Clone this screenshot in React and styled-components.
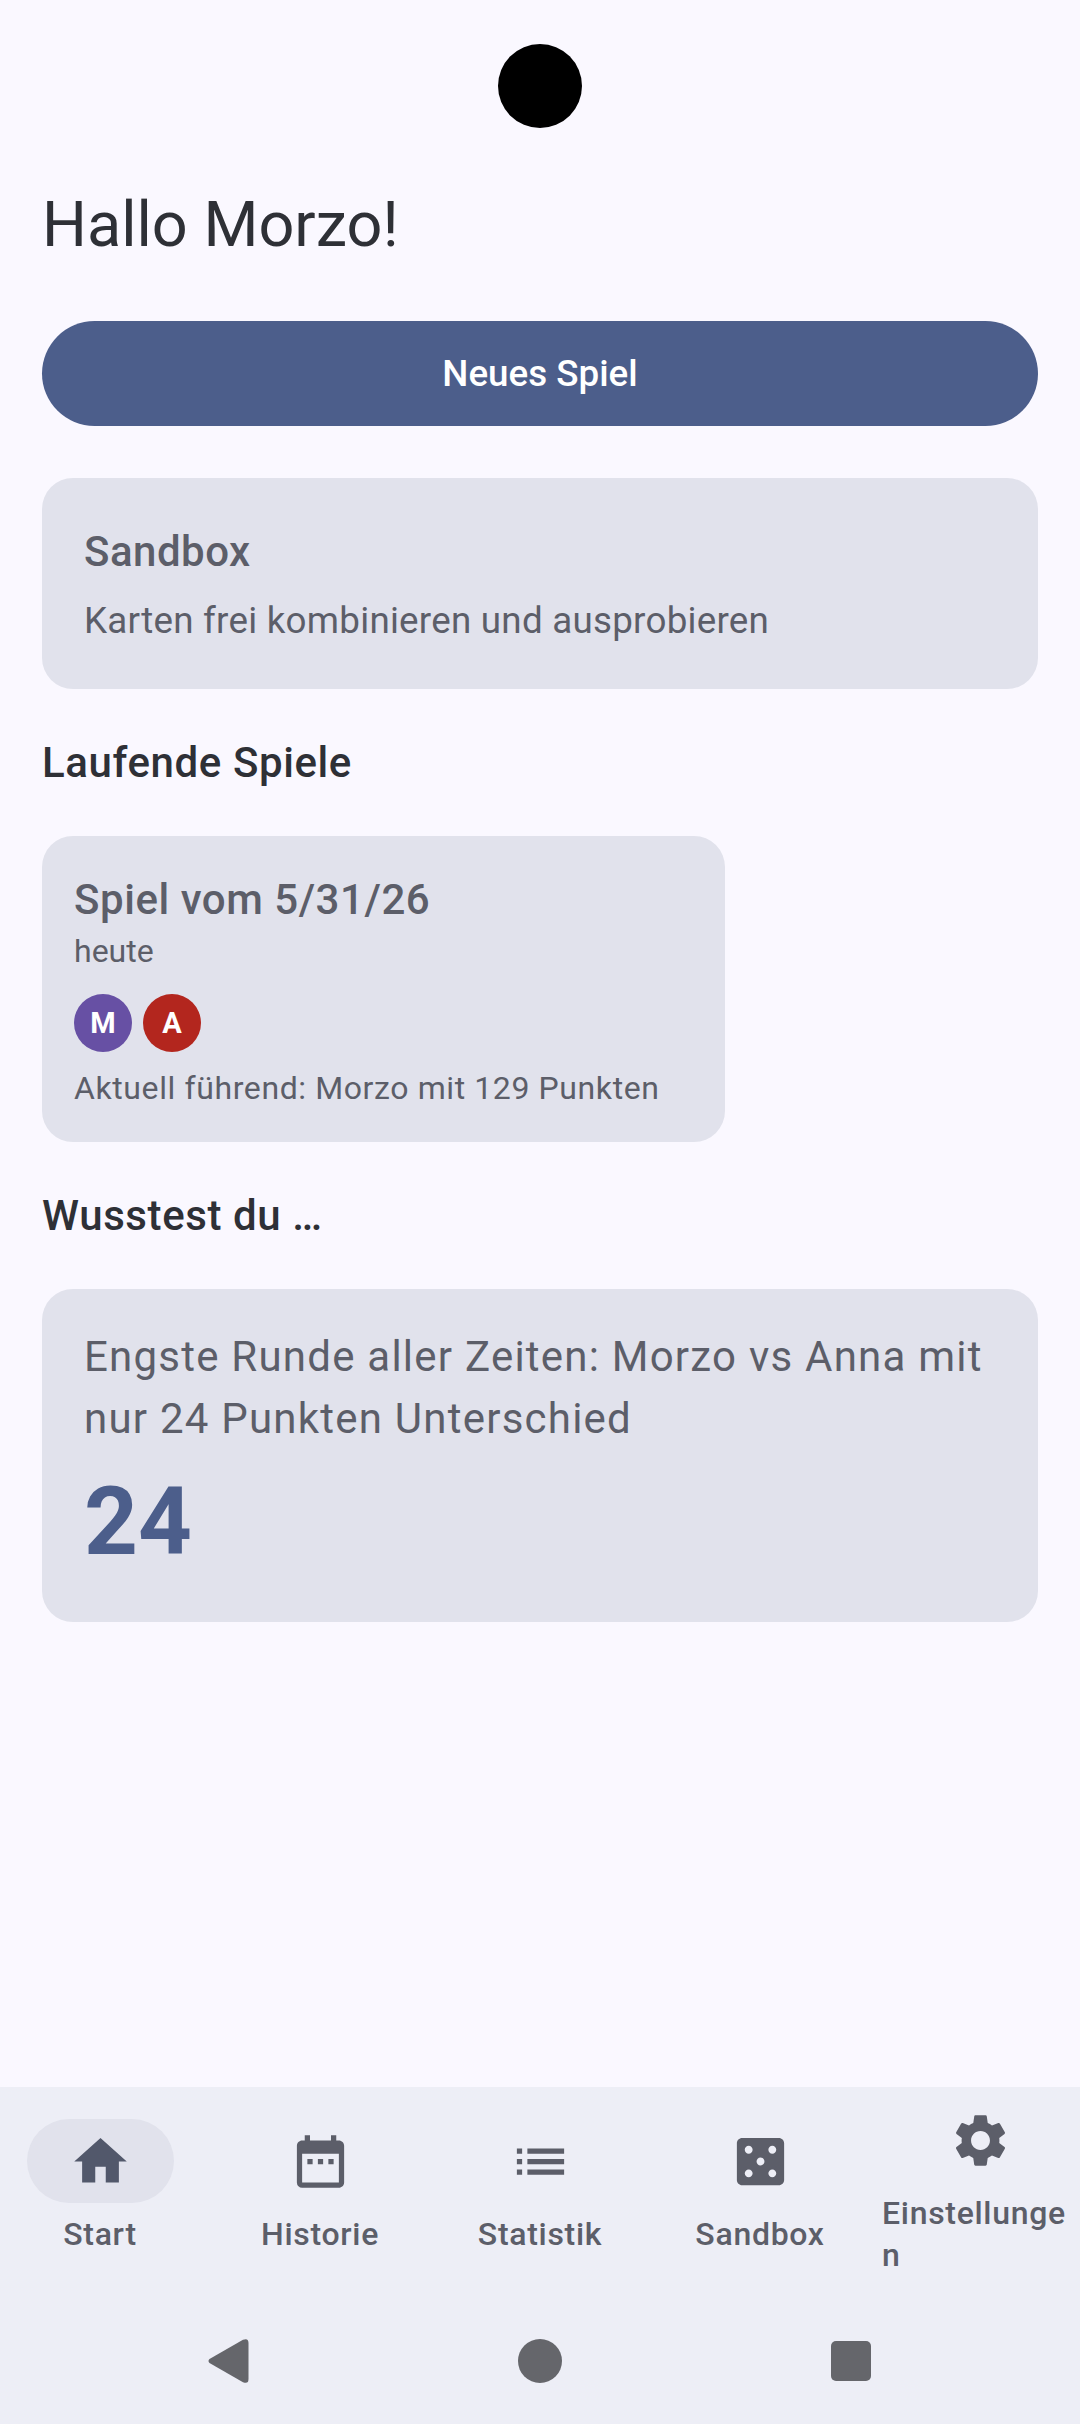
import React from "react";
import styled, { createGlobalStyle } from "styled-components";
import { MdHome, MdDateRange, MdList, MdCasino, MdSettings } from "react-icons/md";

const GlobalStyle = createGlobalStyle`
  html, body {
    margin: 0;
    padding: 0;
    background: #faf8ff;
  }
  * {
    box-sizing: border-box;
  }
`;

const Screen = styled.div`
  width: 1080px;
  height: 2424px;
  display: flex;
  flex-direction: column;
  background: #faf8ff;
  font-family: Roboto, "Noto Sans", sans-serif;
  color: #2e3036;
`;

const Content = styled.main`
  flex: 1;
  display: flex;
  flex-direction: column;
  padding: 44px 42px 0;
`;

const Camera = styled.div`
  width: 84px;
  height: 84px;
  border-radius: 50%;
  background: #000;
  align-self: center;
  margin-bottom: 56px;
`;

const Title = styled.h1`
  margin: 0 0 55px;
  font-size: 63px;
  line-height: 82px;
  font-weight: 400;
`;

const PrimaryButton = styled.button`
  height: 105px;
  border: 0;
  border-radius: 53px;
  background: #4c5e8b;
  color: #fff;
  font: 500 36.75px/50px Roboto, sans-serif;
  margin-bottom: 52px;
`;

const Card = styled.section`
  background: #e1e2ec;
  color: #5c5e69;
  border-radius: 31px;
  width: 996px;
`;

const SandboxCard = styled(Card)`
  padding: 45px 42px 42px;
`;

const GameCard = styled(Card)`
  width: 683px;
  padding: 35px 32px 31px;
`;

const FactCard = styled(Card)`
  padding: 37px 42px 45px;
`;

const CardTitle = styled.div`
  font-size: 42px;
  line-height: 58px;
  font-weight: 500;
  letter-spacing: 0.5px;
`;

const CardBody = styled.div`
  font-size: 36.75px;
  line-height: 52px;
  letter-spacing: 0.25px;
  margin-top: 14px;
`;

const SectionTitle = styled.h2`
  margin: 45px 0 44px;
  font-size: 42px;
  line-height: 58px;
  font-weight: 500;
  letter-spacing: 0.6px;
`;

const GameTitle = styled.div`
  font-size: 42px;
  line-height: 58px;
  font-weight: 500;
  letter-spacing: 0.55px;
`;

const GameDate = styled.div`
  font-size: 32px;
  line-height: 40px;
  margin-top: 2px;
`;

const Avatars = styled.div`
  display: flex;
  gap: 11px;
  margin: 23px 0 13px;
`;

const Avatar = styled.div`
  width: 58px;
  height: 58px;
  border-radius: 50%;
  background: ${({ $color }) => $color};
  color: #fff;
  display: flex;
  align-items: center;
  justify-content: center;
  font-size: 29px;
  font-weight: 700;
`;

const Leader = styled.div`
  font-size: 32px;
  line-height: 46px;
  letter-spacing: 0.6px;
`;

const FactText = styled.div`
  font-size: 42px;
  line-height: 62px;
  letter-spacing: 1.23px;
`;

const FactNumber = styled.div`
  font-size: 94px;
  line-height: 110px;
  font-weight: 700;
  color: #4c5e8b;
  margin-top: 17px;
`;

const NavBar = styled.nav`
  height: 337px;
  background: #edeef6;
  display: flex;
  flex-direction: column;
`;

const NavItems = styled.div`
  height: 200px;
  display: flex;
  justify-content: space-between;
  align-items: center;
  padding: 0 2px;
`;

const NavItem = styled.div`
  width: 196px;
  display: flex;
  flex-direction: column;
  align-items: center;
  gap: 10px;
  color: #5c5e69;
`;

const IconPill = styled.div`
  width: 147px;
  height: 84px;
  border-radius: 42px;
  display: flex;
  align-items: center;
  justify-content: center;
  font-size: 63px;
  background: ${({ $active }) => ($active ? "#e1e2ec" : "transparent")};
  color: ${({ $active }) => ($active ? "#52586b" : "inherit")};
`;

const NavLabel = styled.div`
  width: ${({ $wrap }) => ($wrap ? "196px" : "auto")};
  font-size: 32px;
  line-height: 42px;
  font-weight: 500;
  letter-spacing: 0.7px;
  overflow-wrap: anywhere;
`;

const SystemBar = styled.div`
  flex: 1;
  display: flex;
  justify-content: center;
  align-items: center;
  gap: 263px;
  padding-top: 11px;
  color: #65666b;
`;

const SystemIcon = styled.svg`
  width: 48px;
  height: 48px;
  fill: currentColor;
`;

const navItems = [
  { label: "Start", Icon: MdHome, active: true },
  { label: "Historie", Icon: MdDateRange },
  { label: "Statistik", Icon: MdList },
  { label: "Sandbox", Icon: MdCasino },
  { label: "Einstellungen", Icon: MdSettings, wrap: true },
];

export default function App() {
  return (
    <Screen>
      <GlobalStyle />
      <Content>
        <Camera />
        <Title>Hallo Morzo!</Title>
        <PrimaryButton>Neues Spiel</PrimaryButton>
        <SandboxCard>
          <CardTitle>Sandbox</CardTitle>
          <CardBody>Karten frei kombinieren und ausprobieren</CardBody>
        </SandboxCard>
        <SectionTitle>Laufende Spiele</SectionTitle>
        <GameCard>
          <GameTitle>Spiel vom 5/31/26</GameTitle>
          <GameDate>heute</GameDate>
          <Avatars>
            <Avatar $color="#6750a4">M</Avatar>
            <Avatar $color="#b3261e">A</Avatar>
          </Avatars>
          <Leader>Aktuell führend: Morzo mit 129 Punkten</Leader>
        </GameCard>
        <SectionTitle>Wusstest du …</SectionTitle>
        <FactCard>
          <FactText>Engste Runde aller Zeiten: Morzo vs Anna mit nur 24 Punkten Unterschied</FactText>
          <FactNumber>24</FactNumber>
        </FactCard>
      </Content>
      <NavBar>
        <NavItems>
          {navItems.map(({ label, Icon, active, wrap }) => (
            <NavItem key={label}>
              <IconPill $active={active}>
                <Icon />
              </IconPill>
              <NavLabel $wrap={wrap}>{label}</NavLabel>
            </NavItem>
          ))}
        </NavItems>
        <SystemBar>
          <SystemIcon viewBox="0 0 48 48">
            <path d="M4.5 26 Q2.5 24 4.5 22 L38 2.8 Q43.5 0.6 43.5 6 L43.5 42 Q43.5 47.4 38 45.2 Z" />
          </SystemIcon>
          <SystemIcon viewBox="0 0 48 48">
            <circle cx="24" cy="24" r="22" />
          </SystemIcon>
          <SystemIcon viewBox="0 0 48 48">
            <rect x="4" y="4" width="40" height="40" rx="5" />
          </SystemIcon>
        </SystemBar>
      </NavBar>
    </Screen>
  );
}
